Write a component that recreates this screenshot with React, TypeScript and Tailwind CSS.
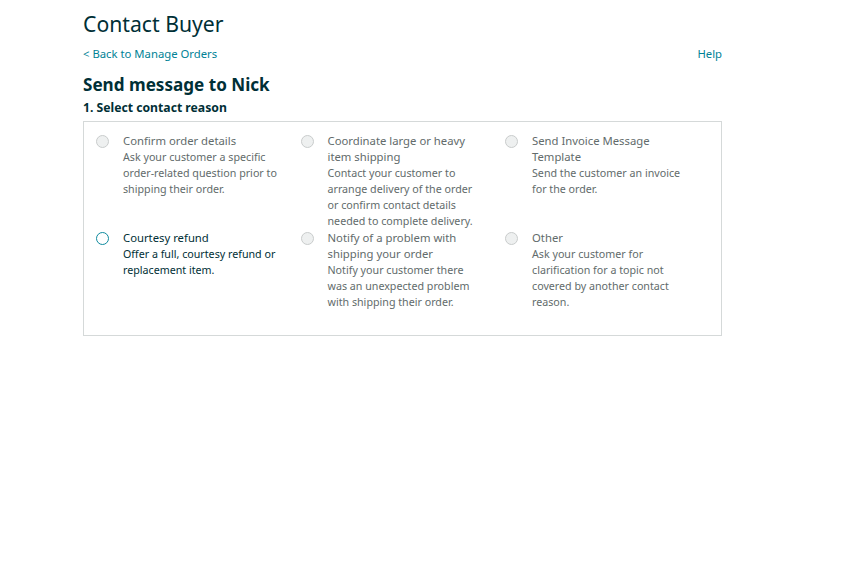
import React from 'react'

type Reason = {
  title: string
  desc: string
  enabled?: boolean
}

const reasons: Reason[] = [
  {
    title: 'Confirm order details',
    desc: 'Ask your customer a specific order-related question prior to shipping their order.',
  },
  {
    title: 'Coordinate large or heavy item shipping',
    desc: 'Contact your customer to arrange delivery of the order or confirm contact details needed to complete delivery.',
  },
  {
    title: 'Send Invoice Message Template',
    desc: 'Send the customer an invoice for the order.',
  },
  {
    title: 'Courtesy refund',
    desc: 'Offer a full, courtesy refund or replacement item.',
    enabled: true,
  },
  {
    title: 'Notify of a problem with shipping your order',
    desc: 'Notify your customer there was an unexpected problem with shipping their order.',
  },
  {
    title: 'Other',
    desc: 'Ask your customer for clarification for a topic not covered by another contact reason.',
  },
]

function ReasonItem({ r }: { r: Reason }) {
  return (
    <div className="flex items-start">
      {/* radio */}
      <div className="w-[27px] pt-[2px] shrink-0">
        {r.enabled ? (
          <span className="block w-[13px] h-[13px] rounded-full border border-[#0e8a9e] bg-white"></span>
        ) : (
          <span className="block w-[13px] h-[13px] rounded-full border border-[#c9cccc] bg-[#eef0f0]"></span>
        )}
      </div>
      <div className={`w-[155px] ${r.enabled ? 'text-[#002f36]' : 'text-[#626b6b]'}`}>
        <p className="text-[11.3px] leading-[16px]">{r.title}</p>
        <p className="text-[10.7px] leading-[16px]">{r.desc}</p>
      </div>
    </div>
  )
}

export default function App() {
  return (
    <div className="bg-white min-h-[584px] font-['Noto_Sans',sans-serif] text-[#002f36]">
      <div className="w-[639px] ml-[83px] pt-[10px]">
        <h1 className="text-[21.2px] leading-[28px]">Contact Buyer</h1>
        <div className="flex justify-between mt-[8px] text-[11.3px] leading-[15px] text-[#008296]">
          <a href="#">&lt; Back to Manage Orders</a>
          <a href="#">Help</a>
        </div>
        <h2 className="mt-[13px] text-[17.1px] leading-[22px] font-bold">Send message to Nick</h2>
        <p className="mt-[3px] text-[12.2px] leading-[18px] font-bold">1. Select contact reason</p>
        <div className="mt-[4px] border border-[#d5d9d9] pl-[12px] pt-[11px] pb-[25px]">
          <div className="grid grid-cols-[204.5px_204.5px_204.5px] gap-y-[1px]">
            {reasons.map((r) => (
              <ReasonItem key={r.title} r={r} />
            ))}
          </div>
        </div>
      </div>
    </div>
  )
}
